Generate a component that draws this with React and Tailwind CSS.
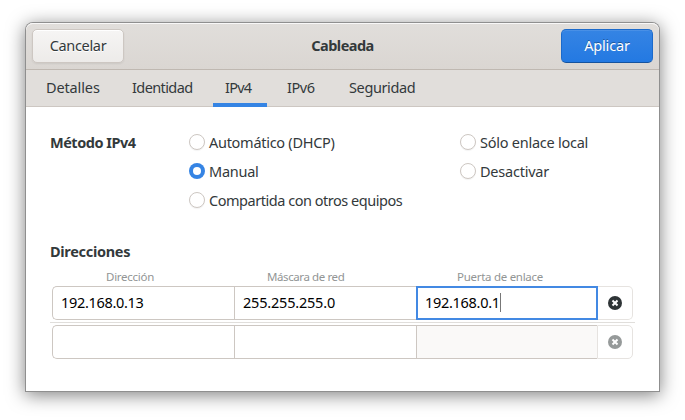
function Radio({ checked, label, tracking }) {
  return (
    <label className="flex h-[29px] items-start pt-[6px]">
      <span
        className={
          checked
            ? "mr-[4px] flex size-4 items-center justify-center rounded-full bg-[#3584e4]"
            : "mr-[4px] size-4 rounded-full border border-[#cdc7c2] bg-white shadow-[0_1px_1px_rgba(0,0,0,0.05)]"
        }
      >
        {checked && <span className="size-2 rounded-full bg-white" />}
      </span>
      <span className={`-mt-[2px] h-[21px] leading-[21px] ${tracking}`}>{label}</span>
    </label>
  );
}

function ClearIcon({ className }) {
  return (
    <svg viewBox="0 0 14 14" className="size-[14px]">
      <circle cx="7" cy="7" r="7" fill="currentColor" />
      <path d="M5.2 5.2 8.8 8.8M8.8 5.2 5.2 8.8" stroke="#fff" strokeWidth="2" strokeLinecap="square" />
    </svg>
  );
}

const tabs = [
  { name: "Detalles", box: "w-[86px] pl-[20px]", tracking: "tracking-[-0.13px]" },
  { name: "Identidad", box: "w-[101px] pl-[20px]", tracking: "tracking-[-0.6px]" },
  { name: "IPv4", box: "w-[54px] pl-[12px]", tracking: "tracking-[-0.75px]", active: true },
  { name: "IPv6", box: "w-[62px] pl-[20px]", tracking: "tracking-[-0.43px]" },
  { name: "Seguridad", box: "w-[90px] pl-[20px]", tracking: "tracking-[-0.38px]" },
];

export default function App() {
  return (
    <div className="h-[420px] w-[685px] overflow-hidden bg-white pl-[26px] pt-[23px] font-['Noto_Sans',sans-serif] text-[14.5px] whitespace-nowrap text-[#33393b]">
      <div className="flex h-[368px] w-[633px] flex-col rounded-t-[7px] bg-white shadow-[0_0_0_1px_#8f8f8f,0_3px_18px_1px_rgba(0,0,0,0.5)]">
        <header className="flex h-[47px] items-start justify-between rounded-t-[7px] border-b border-[#bfb8b1] bg-linear-to-t from-[#dad6d2] to-[#e1dedb] px-[6px] pt-[6px] shadow-[inset_0_1px_#f9f8f8]">
          <button className="h-[34px] w-[92px] rounded-[5px] border border-[#cdc7c2] bg-linear-to-t from-[#edebe9] to-[#f6f5f4] pb-px text-center tracking-[-0.33px] shadow-[inset_0_1px_#fff,0_1px_2px_rgba(0,0,0,0.07)] [text-shadow:0_1px_#fff]">
            Cancelar
          </button>
          <h1 className="mt-[6px] h-[21px] leading-[21px] font-bold tracking-[-0.53px]">Cableada</h1>
          <button className="h-[34px] w-[92px] rounded-[5px] border border-[#1b6acb] border-b-[#15539e] bg-linear-to-t from-[#2379e2] to-[#3584e4] pb-px text-center tracking-[-0.16px] text-white shadow-[inset_0_1px_rgba(255,255,255,0.1)] [text-shadow:0_-1px_rgba(0,0,0,0.35)]">
            Aplicar
          </button>
        </header>

        <nav className="flex h-[37px] bg-[#e1dedb] shadow-[inset_0_-1px_#cdc7c2]">
          {tabs.map((t) => (
            <a key={t.name} className={`h-[37px] pt-[7px] leading-[21px] ${t.active ? "border-b-4 border-[#3584e4]" : ""} ${t.box} ${t.tracking}`}>
              {t.name}
            </a>
          ))}
        </nav>

        <main className="px-[24px] pt-[21px]">
          <section className="flex h-[87px]">
            <h2 className="mt-[4px] w-[139px] leading-[21px] font-bold tracking-[-0.49px]">Método IPv4</h2>
            <div className="w-[271px]">
              <Radio label="Automático (DHCP)" tracking="tracking-[-0.28px]" />
              <Radio checked label="Manual" tracking="tracking-[-0.26px]" />
              <Radio label="Compartida con otros equipos" tracking="tracking-[-0.47px]" />
            </div>
            <div>
              <Radio label="Sólo enlace local" tracking="tracking-[-0.25px]" />
              <Radio label="Desactivar" tracking="tracking-[-0.23px]" />
            </div>
          </section>

          <h2 className="mt-[26px] h-[21px] leading-[21px] font-bold tracking-[-0.31px]">Direcciones</h2>

          <div className="mt-[6px] ml-[2px] flex h-[18px] text-[11.5px] leading-[18px] text-[#929595]">
            <span className="w-[182px] pl-[54px] tracking-[-0.26px]">Dirección</span>
            <span className="w-[182px] pl-[33px] tracking-[-0.4px]">Máscara de red</span>
            <span className="pl-[41px] tracking-[-0.28px]">Puerta de enlace</span>
          </div>

          <div className="ml-[2px] flex h-[34px] leading-[30px] text-black">
            <div className="w-[182px] rounded-l-[5px] border border-r-0 border-[#cdc7c2] pl-[8px] tracking-[-0.32px]">192.168.0.13</div>
            <div className="w-[182px] border border-r-0 border-[#cdc7c2] pl-[8px] tracking-[-0.2px]">255.255.255.0</div>
            <div className="flex w-[182px] border-2 border-[#4389e3] pl-[7px] tracking-[-0.3px]">
              <span className="-mt-px">192.168.0.1</span>
              <span className="mt-[5px] h-[19px] w-px bg-[#777]" />
            </div>
            <button className="flex w-[35px] items-center rounded-r-[5px] border border-l-0 border-[#e6e3e0] pl-[10px] text-[#2e3436]">
              <ClearIcon />
            </button>
          </div>

          <div className="mt-[2px] h-px w-[585px] bg-[#e0dedb]" />

          <div className="mt-[2px] ml-[2px] flex h-[34px]">
            <div className="w-[182px] rounded-l-[5px] border border-r-0 border-[#cdc7c2]" />
            <div className="w-[182px] border border-r-0 border-[#cdc7c2]" />
            <div className="w-[181px] border border-r-0 border-[#cdc7c2] bg-[#faf9f8]" />
            <button className="flex w-[36px] items-center rounded-r-[5px] border border-[#e6e3e0] pl-[10px] text-[#969a9a]">
              <ClearIcon />
            </button>
          </div>
        </main>
      </div>
    </div>
  );
}
